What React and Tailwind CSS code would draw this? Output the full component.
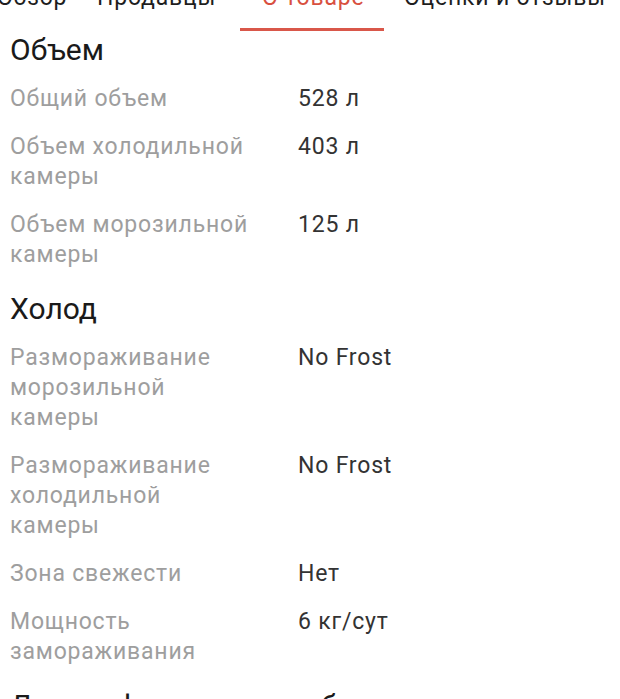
const tabs = [
  { label: 'Обзор', active: false, box: 'w-[102px] pl-[22px]' },
  { label: 'Продавцы', active: false, box: 'w-[163px] pl-[20px]' },
  { label: 'О товаре', active: true, box: 'w-[144px] pl-[22px]' },
  { label: 'Оценки и отзывы', active: false, box: 'pl-[20px]' },
];

const sections = [
  {
    title: 'Объем',
    rows: [
      ['Общий объем', '528 л'],
      ['Объем холодильной камеры', '403 л'],
      ['Объем морозильной камеры', '125 л'],
    ],
  },
  {
    title: 'Холод',
    rows: [
      ['Размораживание морозильной камеры', 'No Frost'],
      ['Размораживание холодильной камеры', 'No Frost'],
      ['Зона свежести', 'Нет'],
      ['Мощность замораживания', '6 кг/сут'],
    ],
  },
  {
    title: 'Другие функции и особенности',
    rows: [],
  },
];

function Tabs() {
  return (
    <div className="h-[32px] overflow-hidden">
      <div className="flex ml-[-25px] mt-[-17px] whitespace-nowrap">
        {tabs.map((tab) => (
          <div key={tab.label} className={`relative h-[48px] shrink-0 ${tab.box}`}>
            <span
              className={`block text-[23px] leading-[30px] tracking-[0.8px] ${
                tab.active ? 'text-[#d8503f]' : 'text-[#1e1e1e]'
              }`}
            >
              {tab.label}
            </span>
            {tab.active && <div className="absolute left-0 right-0 top-[45px] h-[3px] bg-[#d9574a]" />}
          </div>
        ))}
      </div>
    </div>
  );
}

export default function App() {
  return (
    <div className="w-[620px] h-[699px] overflow-hidden bg-white font-['Roboto',sans-serif]">
      <Tabs />
      <div className="pl-[10px] flex flex-col gap-[21px]">
        {sections.map((section) => (
          <section key={section.title}>
            <h2 className="text-[30px] leading-[36px] text-[#1a1a1a] whitespace-nowrap">{section.title}</h2>
            {section.rows.length > 0 && (
              <div className="mt-[16px] flex flex-col gap-[18px]">
                {section.rows.map(([label, value]) => (
                  <div key={label} className="flex text-[23px] leading-[30px] tracking-[0.8px]">
                    <div className="w-[288px] pr-[44px] shrink-0 text-[#9e9e9e]">{label}</div>
                    <div className="text-[#333333]">{value}</div>
                  </div>
                ))}
              </div>
            )}
          </section>
        ))}
      </div>
    </div>
  );
}
